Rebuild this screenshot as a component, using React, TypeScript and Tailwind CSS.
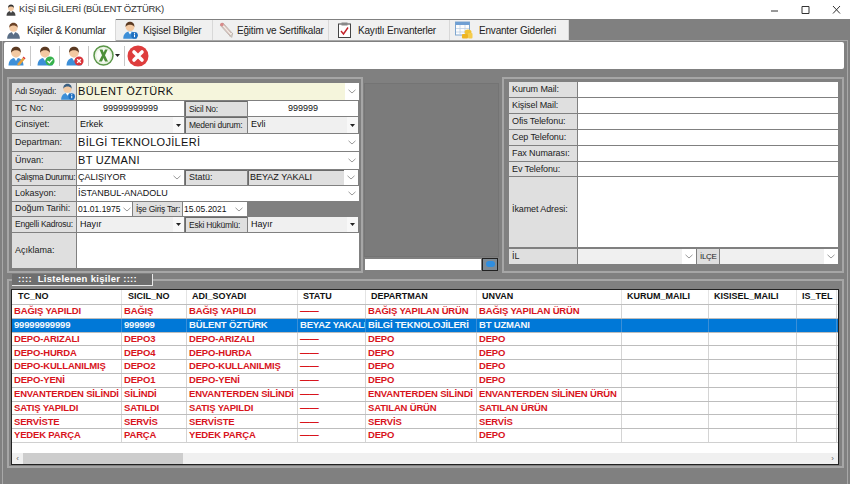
import React from "react"

const font = "font-['Liberation_Sans',Arial,sans-serif]"

// ─── Icons ────────────────────────────────────────────────────────────────────

function Person({ size = 20, body = "#3f8fd6", hair = "#5b3a22", children }: { size?: number; body?: string; hair?: string; children?: React.ReactNode }) {
  return (
    <svg width={size} height={size} viewBox="0 0 24 24" className="shrink-0">
      <path d="M3 23.500c0-6 3.500-9.500 9-9.500s9 3.500 9 9.500z" fill={body} />
      <path d="M9.500 14l2.500 4 2.500-4z" fill="#fff" />
      <circle cx="12" cy="8" r="5.800" fill="#f3c9a2" />
      <path d="M6.200 8C5.700 3 9 1 12 1s6.300 2 5.800 7C16.500 5.500 14 5 12 5S7.500 5.500 6.200 8z" fill={hair} />
      {children}
    </svg>
  )
}

function Chevron({ color = "#9a9a9a" }: { color?: string }) {
  return (
    <svg width="8" height="5" viewBox="0 0 8 5" className="shrink-0">
      <path d="M.5 .8L4 4l3.500-3.200" fill="none" stroke={color} strokeWidth="1" />
    </svg>
  )
}

function Caret() {
  return (
    <svg width="5" height="3" viewBox="0 0 5 3" className="shrink-0">
      <path d="M0 0h5L2.500 3z" fill="#222" />
    </svg>
  )
}

function Scroll() {
  return (
    <svg width="18" height="18" viewBox="0 0 18 18" className="shrink-0">
      <path d="M3 4l3-2 10 11-3 2z" fill="#f1ece4" stroke="#b0a7a0" strokeWidth=".8" />
      <path d="M5 5l8 9M7 4l7 8" stroke="#c9a8a8" strokeWidth=".8" />
      <circle cx="5" cy="3.500" r="1.800" fill="#d98a8a" />
      <path d="M12 15l3 2 1-3z" fill="#c7c0ba" />
    </svg>
  )
}

function Clipboard() {
  return (
    <svg width="15" height="16" viewBox="0 0 15 16" className="shrink-0">
      <rect x="1.500" y="2" width="12" height="13.500" fill="#fff" stroke="#444" strokeWidth="1" />
      <rect x="4.500" y=".5" width="6" height="3" fill="#888" />
      <path d="M4 9l2.500 3L11 5.500" fill="none" stroke="#c3222a" strokeWidth="1.400" />
    </svg>
  )
}

function TableCoins() {
  return (
    <svg width="18" height="18" viewBox="0 0 18 18" className="shrink-0">
      <rect x=".5" y="1" width="14" height="13" fill="#fdfdfd" stroke="#7ea6cf" />
      <rect x=".5" y="1" width="14" height="3" fill="#6f9fd3" />
      <path d="M5 4v10M10 4v10M1 7.500h13M1 11h13" stroke="#bcd0e6" strokeWidth=".8" />
      <ellipse cx="13" cy="11" rx="3.500" ry="2.500" fill="#f1c232" />
      <rect x="7" y="13" width="6" height="4.500" rx="1" fill="#eeb422" />
      <rect x="13" y="12" width="4.500" height="5.500" rx="1" fill="#f5cc4c" />
    </svg>
  )
}

function InfoBadge() {
  return (
    <g>
      <circle cx="18" cy="19" r="4.500" fill="#1f6fc0" />
      <rect x="17.300" y="18" width="1.400" height="3.500" fill="#fff" />
      <rect x="17.300" y="15.800" width="1.400" height="1.400" fill="#fff" />
    </g>
  )
}

function ExcelIcon() {
  return (
    <svg width="21" height="21" viewBox="0 0 21 21" className="shrink-0">
      <circle cx="10.500" cy="10.500" r="9.500" fill="#e9f2e2" stroke="#5a9648" strokeWidth="1.500" />
      <circle cx="10.500" cy="10.500" r="7" fill="#fbfdf9" />
      <path d="M6.500 4.500h3l1.200 3 1.300-3h2.700l-2.700 5.800 3 6.200h-3l-1.500-3.500-1.500 3.500H5.800l3.200-6.200z" fill="#4d8f38" />
    </svg>
  )
}

function RedX() {
  return (
    <svg width="22" height="22" viewBox="0 0 22 22" className="shrink-0">
      <circle cx="11" cy="11" r="10.500" fill="#de3d3d" />
      <path d="M7 7l8 8M15 7l-8 8" stroke="#fff" strokeWidth="3.600" strokeLinecap="round" />
    </svg>
  )
}

// ─── Form parts ───────────────────────────────────────────────────────────────

function Label({
  text,
  w,
  sunken,
  size = "text-[9px]",
  children,
}: {
  text: string
  w: string
  sunken?: boolean
  size?: string
  children?: React.ReactNode
}) {
  return (
    <div
      className={`flex shrink-0 items-center overflow-hidden whitespace-nowrap bg-[#dfdfdf] pl-[3px] text-[#222] ${size} ${w} ${
        sunken ? "border-t border-l border-[#6a6a6a]" : ""
      }`}
    >
      {text}
      {children}
    </div>
  )
}

function Combo({
  text,
  cls = "flex-1",
  bg = "bg-white",
  size = "text-[9px]",
}: {
  text: string
  cls?: string
  bg?: string
  size?: string
}) {
  return (
    <div className={`flex items-stretch bg-white ${cls}`}>
      <div className={`flex min-w-0 flex-1 items-center overflow-hidden whitespace-nowrap pl-[1px] text-[#111] ${bg} ${size}`}>{text}</div>
      <div className="flex w-[14px] shrink-0 items-center justify-center">
        <Chevron />
      </div>
    </div>
  )
}

function Drop({ text, cls }: { text: string; cls: string }) {
  return (
    <div className={`flex items-stretch ${cls}`}>
      <div className="flex flex-1 items-center bg-[#f0f0f0] pl-[3px] text-[9px] text-[#111]">{text}</div>
      <div className="flex w-[11px] items-center justify-center bg-[#f8f8f8]">
        <Caret />
      </div>
    </div>
  )
}

function Value({ text, cls }: { text: string; cls: string }) {
  return <div className={`flex items-center justify-center bg-white text-[9px] text-[#111] ${cls}`}>{text}</div>
}

const tight = "text-[8.5px] tracking-[-0.25px]"
const tighter = "text-[8.5px] tracking-[-0.4px]"
const big = "text-[11px] tracking-[0.3px] pl-[1px]"

function LeftForm() {
  return (
    <div className="flex h-[196px] w-[356px] shrink-0 flex-col gap-[1px] border-2 border-[#a6a6a6] pt-[4px] pr-[2px] pl-[3px]">
      <div className="flex h-[17px] gap-[1px]">
        <Label text="Adı Soyadı:" w="w-[64px]" size={tight}>
          <span className="ml-[3px]">
            <Person size={17} body="#3d8fd8" hair="#3a5f80">
              <InfoBadge />
            </Person>
          </span>
        </Label>
        <Combo text="BÜLENT ÖZTÜRK" bg="bg-[#f5f5dc]" size={big} />
      </div>
      <div className="flex h-[15px] gap-[1px]">
        <Label text="TC No:" w="w-[64px]" />
        <Value text="99999999999" cls="w-[107px]" />
        <Label text="Sicil No:" w="w-[62px]" sunken size={tight} />
        <Value text="999999" cls="w-[110px]" />
      </div>
      <div className="flex h-[16px] gap-[1px]">
        <Label text="Cinsiyet:" w="w-[64px]" />
        <Drop text="Erkek" cls="w-[107px]" />
        <Label text="Medeni durum:" w="w-[62px]" sunken size={tight} />
        <Drop text="Evli" cls="w-[110px]" />
      </div>
      <div className="flex h-[17px] gap-[1px]">
        <Label text="Departman:" w="w-[64px]" />
        <Combo text="BİLGİ TEKNOLOJİLERİ" size={big} />
      </div>
      <div className="flex h-[17px] gap-[1px]">
        <Label text="Ünvan:" w="w-[64px]" />
        <Combo text="BT UZMANI" size={big} />
      </div>
      <div className="flex h-[15px] gap-[1px]">
        <Label text="Çalışma Durumu:" w="w-[64px]" size={tighter} />
        <Combo text="ÇALIŞIYOR" cls="w-[107px]" />
        <Label text="Statü:" w="w-[62px]" sunken />
        <div className="flex w-[110px] items-stretch bg-white">
          <div className="flex flex-1 items-center border-t border-l border-[#6a6a6a] bg-[#dfdfdf] pl-[1px] text-[9px] text-[#111]">BEYAZ YAKALI</div>
          <div className="flex w-[14px] items-center justify-center">
            <Chevron />
          </div>
        </div>
      </div>
      <div className="flex h-[15px] gap-[1px]">
        <Label text="Lokasyon:" w="w-[64px]" />
        <Combo text="İSTANBUL-ANADOLU" />
      </div>
      <div className="flex h-[14px] gap-[1px]">
        <Label text="Doğum Tarihi:" w="w-[64px]" />
        <div className="flex w-[55px] items-center justify-between bg-white pr-[1px] pl-[1px] text-[8.5px] text-[#111]">
          01.01.1975
          <Chevron />
        </div>
        <Label text="İşe Giriş Tar:" w="w-[49px]" size={tight} />
        <div className="flex w-[64px] items-center justify-between bg-white pr-[4px] pl-[1px] text-[8.5px] text-[#111]">
          15.05.2021
          <Chevron />
        </div>
      </div>
      <div className="flex h-[15px] gap-[1px]">
        <Label text="Engelli Kadrosu:" w="w-[64px]" size={tight} />
        <Drop text="Hayır" cls="w-[107px]" />
        <Label text="Eski Hükümlü:" w="w-[62px]" sunken size={tight} />
        <Drop text="Hayır" cls="w-[110px]" />
      </div>
      <div className="flex h-[35px] gap-[1px]">
        <Label text="Açıklama:" w="w-[64px]" />
        <div className="flex-1 bg-white" />
      </div>
    </div>
  )
}

function RightForm() {
  const rows: [string, string, string][] = [
    ["Kurum Mail:", "h-[15px]", "pt-px"],
    ["Kişisel Mail:", "h-[15px]", "pt-px"],
    ["Ofis Telefonu:", "h-[15px]", "pt-px"],
    ["Cep Telefonu:", "h-[15px]", "pt-px"],
    ["Fax Numarası:", "h-[15px]", "pt-px"],
    ["Ev Telefonu:", "h-[14px]", "pt-px"],
    ["İkamet Adresi:", "h-[70px]", "pb-[4px]"],
  ]
  return (
    <div className="flex h-[196px] w-[342px] shrink-0 flex-col gap-[1px] border-2 border-[#a6a6a6] pt-[3px] pl-[5px]">
      {rows.map(([t, h, pad]) => (
        <div key={t} className={`flex gap-[1px] ${h}`}>
          <Label text={t} w="w-[68px]" size={`text-[9px] tracking-[-0.1px] ${pad}`} />
          <div className="w-[260px] bg-white" />
        </div>
      ))}
      <div className="mt-[1px] flex h-[15px] gap-[1px]">
        <Label text="İL" w="w-[68px]" size="text-[9px] pt-px" />
        <div className="flex w-[118px] items-center bg-white">
          <div className="h-full flex-1 bg-[#f0f0f0]" />
          <div className="flex w-[14px] justify-center">
            <Chevron />
          </div>
        </div>
        <Label text="İLÇE" w="w-[22px]" size="text-[8px] tracking-[-0.3px]" />
        <div className="flex w-[118px] items-center bg-white">
          <div className="h-full flex-1 bg-[#f0f0f0]" />
          <div className="flex w-[14px] justify-center">
            <Chevron />
          </div>
        </div>
      </div>
    </div>
  )
}

// ─── Grid ─────────────────────────────────────────────────────────────────────

const columns = [
  { name: "TC_NO", w: "w-[110px]", head: "pl-[6px]" },
  { name: "SICIL_NO", w: "w-[65px]", head: "pl-[6px]" },
  { name: "ADI_SOYADI", w: "w-[111px]", head: "pl-[5px]" },
  { name: "STATU", w: "w-[68px]", head: "pl-[5px]" },
  { name: "DEPARTMAN", w: "w-[111px]", head: "pl-[5px]" },
  { name: "UNVAN", w: "w-[145px]", head: "pl-[5px]" },
  { name: "KURUM_MAILI", w: "w-[87px]", head: "pl-[5px]" },
  { name: "KISISEL_MAILI", w: "w-[88px]", head: "pl-[5px]" },
  { name: "IS_TEL", w: "w-[40px]", head: "pl-[5px]" },
]

const rows = [
  ["BAĞIŞ YAPILDI", "BAĞIŞ", "BAĞIŞ YAPILDI", "——", "BAĞIŞ YAPILAN ÜRÜN", "BAĞIŞ YAPILAN ÜRÜN"],
  ["99999999999", "999999", "BÜLENT ÖZTÜRK", "BEYAZ YAKALI", "BİLGİ TEKNOLOJİLERİ", "BT UZMANI"],
  ["DEPO-ARIZALI", "DEPO3", "DEPO-ARIZALI", "——", "DEPO", "DEPO"],
  ["DEPO-HURDA", "DEPO4", "DEPO-HURDA", "——", "DEPO", "DEPO"],
  ["DEPO-KULLANILMIŞ", "DEPO2", "DEPO-KULLANILMIŞ", "——", "DEPO", "DEPO"],
  ["DEPO-YENİ", "DEPO1", "DEPO-YENİ", "——", "DEPO", "DEPO"],
  ["ENVANTERDEN SİLİNDİ", "SİLİNDİ", "ENVANTERDEN SİLİNDİ", "——", "ENVANTERDEN SİLİNDİ", "ENVANTERDEN SİLİNEN ÜRÜN"],
  ["SATIŞ YAPILDI", "SATILDI", "SATIŞ YAPILDI", "——", "SATILAN ÜRÜN", "SATILAN ÜRÜN"],
  ["SERVİSTE", "SERVİS", "SERVİSTE", "——", "SERVİS", "SERVİS"],
  ["YEDEK PARÇA", "PARÇA", "YEDEK PARÇA", "——", "DEPO", "DEPO"],
]

function DataGrid() {
  return (
    <div className="flex h-[176px] w-[828px] flex-col overflow-hidden border border-[#222] bg-white">
      <div className="flex h-[14px] shrink-0">
        {columns.map((c) => (
          <div key={c.name} className={`flex items-center border-r border-[#e4e4e4] text-[9px] font-bold text-[#111] ${c.w} ${c.head}`}>
            {c.name}
          </div>
        ))}
      </div>
      {rows.map((r, i) => {
        const selected = i === 1
        return (
          <div
            key={r[0]}
            className={`flex h-[13.8px] shrink-0 border-t border-[#bdbdbd] ${selected ? "bg-[#0078d7] text-[#f4f8fc]" : "text-[#d8141c]"}`}
          >
            {columns.map((c, j) => (
              <div
                key={c.name}
                className={`flex items-center overflow-hidden whitespace-nowrap border-r pl-[2px] text-[9.5px] font-bold tracking-[-0.17px] ${c.w} ${
                  selected ? "border-[#3a8fd8]" : "border-[#d4d4d4]"
                }`}
              >
                {r[j] ?? ""}
              </div>
            ))}
          </div>
        )
      })}
      <div className="flex-1 border-t border-[#d0d0d0]" />
      <div className="flex h-[11px] shrink-0 items-center bg-[#f0f0f0]">
        <span className="flex w-[11px] justify-center text-[8px] leading-none text-[#666]">‹</span>
        <div className="h-full w-[160px] bg-[#cdcdcd]" />
        <div className="flex-1" />
        <span className="flex w-[11px] justify-center text-[8px] leading-none text-[#666]">›</span>
      </div>
    </div>
  )
}

// ─── Window ───────────────────────────────────────────────────────────────────

const tabs = [
  { label: "Kişiler & Konumlar", w: "w-[116px]", gap: "gap-[5px] pl-[5px]", icon: <Person size={17} body="#5a6e86" hair="#6b4226" />, active: true },
  { label: "Kişisel Bilgiler", w: "w-[97px]", gap: "gap-[4px] pl-[5px]", icon: <Person size={18} body="#3d8fd8" hair="#5b3a22"><InfoBadge /></Person> },
  { label: "Eğitim ve Sertifikalar", w: "w-[116px]", gap: "gap-[2px] pl-[4px]", icon: <Scroll /> },
  { label: "Kayıtlı Envanterler", w: "w-[121px]", gap: "gap-[6px] pl-[8px]", icon: <Clipboard /> },
  { label: "Envanter Giderleri", w: "w-[119px]", gap: "gap-[6px] pl-[5px]", icon: <TableCoins /> },
]

function ToolSep() {
  return <div className="h-[20px] w-px bg-[#c8c8c8]" />
}

export default function App() {
  return (
    <div className={`flex h-[484px] w-[850px] flex-col overflow-hidden bg-[#808080] ${font}`}>
      {/* title bar */}
      <div className="flex h-[19px] shrink-0 items-center bg-white pr-[9px] pl-[5px]">
        <Person size={12} body="#444" hair="#333" />
        <span className="ml-[2px] flex-1 text-[9.5px] tracking-[-0.3px] text-[#333]">KİŞİ BİLGİLERİ (BÜLENT ÖZTÜRK)</span>
        <svg width="70" height="10" viewBox="0 0 70 10" className="text-[#333]">
          <path d="M0 6h7M31 1.500h7v7h-7zM62 1l7 7.500M69 1l-7 7.500" fill="none" stroke="currentColor" strokeWidth="1" />
        </svg>
      </div>

      {/* tab strip */}
      <div className="z-10 flex h-[21px] shrink-0 items-start">
        {tabs.map((t) => (
          <div
            key={t.label}
            className={`flex shrink-0 items-center overflow-hidden whitespace-nowrap border-r border-[#d8d8d8] text-[10px] tracking-[-0.2px] text-[#222] ${t.w} ${t.gap} ${
              t.active ? "h-[22px] bg-white" : "mt-px h-[20px] bg-[#f0f0f0]"
            }`}
          >
            {t.icon}
            <span>{t.label}</span>
          </div>
        ))}
      </div>

      {/* tab page */}
      <div className="mx-[2px] flex flex-1 flex-col border-x border-t border-[#a8a8a8] pt-[1px]">
        <div className="ml-[1px] flex h-[27px] w-[840px] shrink-0 items-center gap-[4px] rounded-[2px] bg-white pl-[2px]">
          <Person size={20} body="#3d8fd8">
            <path d="M14 21l6-7 2.500 2-6 7-3 .5z" fill="#e8a13a" />
            <path d="M20 14l2.500 2 1-1.300-2.500-2z" fill="#d33" />
          </Person>
          <ToolSep />
          <Person size={20} body="#3d8fd8">
            <circle cx="18" cy="18" r="5.500" fill="#37b24d" />
            <path d="M15 18l2.200 2.200L21 16" fill="none" stroke="#fff" strokeWidth="1.600" />
          </Person>
          <ToolSep />
          <Person size={20} body="#3d8fd8">
            <circle cx="18" cy="18" r="5.500" fill="#d8343a" />
            <path d="M15.800 15.800l4.400 4.400M20.200 15.800l-4.400 4.400" stroke="#fff" strokeWidth="1.600" />
          </Person>
          <ToolSep />
          <div className="flex items-center gap-[1px]">
            <ExcelIcon />
            <Caret />
          </div>
          <ToolSep />
          <span className="-ml-[2px]">
            <RedX />
          </span>
        </div>

        <div className="mt-[8px] ml-[4px] flex">
          <LeftForm />
          <div className="mt-[6px] ml-[1px] flex w-[135px] shrink-0 flex-col">
            <div className="h-[174px] border border-[#747474] bg-[#7b7b7b]" />
            <div className="mt-[1px] flex h-[13px] items-center">
              <div className="ml-px h-[11px] w-[116px] bg-white" />
              <div className="ml-px flex h-[13px] w-[16px] items-start justify-center border border-[#222] bg-[#7e8a94] pt-[2px]">
                <div className="h-[6px] w-[9px] rounded-full bg-[#2f8ee0]" />
              </div>
            </div>
          </div>
          <div className="ml-[3px]">
            <RightForm />
          </div>
        </div>

        {/* list group */}
        <div className="relative mt-[6px] ml-[4px] h-[189px] w-[837px] border-2 border-[#a6a6a6] pt-[8px] pl-[2px]">
          <div className="absolute top-[-7px] left-[3px] flex h-[12px] w-[141px] items-center border-r border-b border-[#e8e8e8] bg-[#6e6e6e] pl-[6px] text-[9.5px] font-bold tracking-[0.3px] whitespace-pre text-white">
            {"::::  Listelenen kişiler ::::"}
          </div>
          <DataGrid />
        </div>
      </div>
    </div>
  )
}
